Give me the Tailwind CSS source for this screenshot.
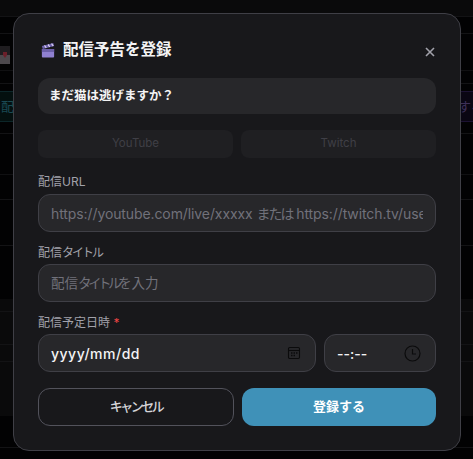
<!DOCTYPE html>
<html lang="ja">
<head>
    <meta charset="UTF-8">
    <meta name="viewport" content="width=device-width, initial-scale=1.0">
    <title>配信予告を登録</title>
    <script src="https://cdn.jsdelivr.net/npm/@tailwindcss/browser@4"></script>
</head>
<body class="bg-[#020203] h-[459px] overflow-hidden relative font-['Inter','Noto_Sans_CJK_JP',sans-serif]">
    <!-- page behind the backdrop -->
    <div class="flex flex-col h-full">
        <div class="h-[17px] bg-[#0a0a0b] border-b border-[#131315]"></div>
        <div class="h-[17px] border-b border-[#131315]"></div>
        <div class="h-[37px] border-b border-[#101012] pt-[12px]">
            <svg width="10" height="18" viewBox="0 0 10 18" class="block">
                <rect width="10" height="9" fill="#1f1d20"/>
                <rect y="9" width="10" height="9" fill="#4c484c"/>
                <path d="M3 6h4v3l-2 3-2-3z" fill="#6b1f2a"/>
            </svg>
        </div>
        <div class="h-[13px] border-b border-[#131315]"></div>
        <div class="h-[7px]"></div>
        <div class="h-[31px] flex justify-between overflow-hidden text-[13px]">
            <div class="w-[50%] bg-[#04100f] border-y border-[#0c2629] flex items-center pl-[1px] text-[#1a4a54]">配</div>
            <div class="w-[50%] bg-[#0a0613] border-y border-[#1c1232] flex items-center justify-end text-[#3d2f57] mr-[-11px]">する</div>
        </div>
        <div class="h-[12px] border-b border-[#131315]"></div>
        <div class="h-[41px] border-b border-[#101012]"></div>
        <div class="h-[25px] border-b border-[#131315]"></div>
        <div class="h-[46px] border-b border-[#131315]"></div>
        <div class="h-[53px]"></div>
        <div class="h-[13px] bg-[#0a0a0b] border-b border-[#131315]"></div>
        <div class="h-[33px] bg-[#0a0a0b] border-b border-[#131315]"></div>
        <div class="h-[17px] bg-[#0a0a0b] border-b border-[#131315]"></div>
        <div class="h-[54px] bg-[#0a0a0b]"></div>
        <div class="h-[32px] border-b border-[#131315]"></div>
        <div class="flex-grow"></div>
    </div>

    <!-- modal -->
    <div class="absolute left-[13px] top-[13px] w-[448px] h-[438px] bg-[#18181b] border border-[#3f3f46] rounded-2xl px-6 pt-6 flex flex-col">
        <div class="flex items-center justify-between h-[24px] mb-[16px]">
            <h2 class="flex items-center gap-[8px] text-[15.5px] font-bold text-[#f4f4f5] mt-[-1px]">
                <svg width="14" height="16" viewBox="0 0 16 16" preserveAspectRatio="none" class="ml-[3px]">
                    <path d="M1 7h14v7.5a1 1 0 0 1-1 1H2a1 1 0 0 1-1-1z" fill="#8f80d0"/>
                    <path d="M1 7h14v3H1z" fill="#6b5fa8"/>
                    <path d="M1 4l13-3 1 3-13 3z" fill="#6f62ad"/>
                    <path d="M4 3.4l2 2.4M8 2.5l2 2.4M12 1.6l2 2.4" stroke="#ddd6f5" stroke-width="1.2"/>
                </svg>
                配信予告を登録
            </h2>
            <button class="text-[#a1a1aa] mr-[1px] mt-[3px]">
                <svg width="10" height="10" viewBox="0 0 10 10" fill="none" stroke="currentColor" stroke-width="1.6"><path d="M1 1l8 8M9 1l-8 8"/></svg>
            </button>
        </div>

        <div class="h-[36px] bg-[#27272a] rounded-xl px-[11px] flex items-center text-[12.5px] font-bold text-[#f4f4f5]">まだ猫は逃げますか？</div>

        <div class="grid grid-cols-2 gap-2 mt-4">
            <button class="h-[28px] bg-[#1f1f22] rounded-lg text-[11.5px] text-[#3f3f46]">YouTube</button>
            <button class="h-[28px] bg-[#1f1f22] rounded-lg text-[11.5px] text-[#3f3f46]">Twitch</button>
        </div>

        <label class="text-[12px] leading-[16px] text-[#a1a1aa] mt-[16px] mb-[4px]">配信URL</label>
        <div class="h-[38px] bg-[#27272a] border border-[#3f3f46] rounded-xl px-3 flex items-center text-[14px] text-[#71717a] tracking-[-0.1px]">
            <span class="whitespace-nowrap overflow-hidden w-full">https://youtube.com/live/xxxxx <span class="tracking-[-2px]">または</span> https://twitch.tv/username</span>
        </div>

        <label class="text-[12px] leading-[16px] text-[#a1a1aa] mt-[13px] mb-[3px]">配信<span class="tracking-[-2px]">タイトル</span></label>
        <div class="h-[38px] bg-[#27272a] border border-[#3f3f46] rounded-xl px-3 flex items-center text-[13.5px] text-[#71717a]">
            <span>配信<span class="tracking-[-3.5px]">タイトル</span>を入力</span>
        </div>

        <label class="text-[12px] leading-[16px] text-[#a1a1aa] mt-[13px] mb-[3px]">配信予定日時 <span class="text-[#ef4444]">*</span></label>
        <div class="flex gap-2">
            <div class="flex-grow h-[38px] bg-[#27272a] border border-[#3f3f46] rounded-xl pl-3 pr-[14px] flex items-center justify-between text-[14px] font-medium tracking-[0.5px] text-[#f4f4f5]">
                <span>yyyy/mm/dd</span>
                <svg width="14" height="14" viewBox="0 0 14 14" fill="none" stroke="#0b0b0c" stroke-width="1.1">
                    <rect x="1.5" y="1.5" width="11" height="11" rx="1.2"/>
                    <path d="M1.5 4.5h11"/>
                    <path d="M4 7h1.5M6.5 7H8M9 7h1.5M4 9.5h1.5M6.5 9.5H8" stroke-width="1.3"/>
                </svg>
            </div>
            <div class="w-[112px] h-[38px] bg-[#27272a] border border-[#3f3f46] rounded-xl pl-3 pr-[14px] flex items-center justify-between text-[14px] font-medium text-[#f4f4f5]">
                <span>--:--</span>
                <svg width="17" height="17" viewBox="0 0 17 17" fill="none" stroke="#0b0b0c" stroke-width="1.2">
                    <circle cx="8.5" cy="8.5" r="7.5"/>
                    <path d="M8.5 4v5h3.5"/>
                </svg>
            </div>
        </div>

        <div class="flex gap-2 mt-4">
            <button class="w-[196px] h-[38px] border border-[#52525b] rounded-xl text-[13px] font-medium tracking-[-2.5px] text-[#d4d4d8]">キャンセル</button>
            <button class="flex-grow h-[38px] bg-[#3f91b8] rounded-xl text-[13px] font-bold text-white">登録する</button>
        </div>
    </div>
</body>
</html>
